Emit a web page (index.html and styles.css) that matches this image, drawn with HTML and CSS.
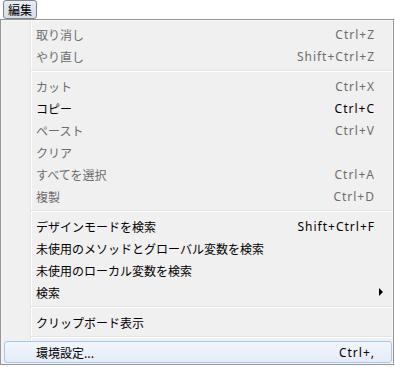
FILE: index.html
```html
<!DOCTYPE html>
<html lang="ja">
<head>
  <meta charset="UTF-8">
  <title>編集メニュー</title>
  <link rel="stylesheet" href="styles.css">
</head>
<body>

<div class="menubar">
  <span class="menubar-item open">編集</span>
</div>

<div class="menu">
  <div class="item disabled"><span class="label">取り消し</span><span class="key">Ctrl+Z</span><span class="sub"></span></div>
  <div class="item disabled"><span class="label">やり直し</span><span class="key">Shift+Ctrl+Z</span><span class="sub"></span></div>
  <div class="sep"></div>
  <div class="item disabled"><span class="label">カット</span><span class="key">Ctrl+X</span><span class="sub"></span></div>
  <div class="item"><span class="label">コピー</span><span class="key">Ctrl+C</span><span class="sub"></span></div>
  <div class="item disabled"><span class="label">ペースト</span><span class="key">Ctrl+V</span><span class="sub"></span></div>
  <div class="item disabled"><span class="label">クリア</span><span class="key"></span><span class="sub"></span></div>
  <div class="item disabled"><span class="label">すべてを選択</span><span class="key">Ctrl+A</span><span class="sub"></span></div>
  <div class="item disabled"><span class="label">複製</span><span class="key">Ctrl+D</span><span class="sub"></span></div>
  <div class="sep"></div>
  <div class="item"><span class="label">デザインモードを検索</span><span class="key">Shift+Ctrl+F</span><span class="sub"></span></div>
  <div class="item"><span class="label">未使用のメソッドとグローバル変数を検索</span><span class="key"></span><span class="sub"></span></div>
  <div class="item"><span class="label">未使用のローカル変数を検索</span><span class="key"></span><span class="sub"></span></div>
  <div class="item"><span class="label">検索</span><span class="key"></span><span class="sub"><i class="arrow"></i></span></div>
  <div class="sep"></div>
  <div class="item"><span class="label">クリップボード表示</span><span class="key"></span><span class="sub"></span></div>
  <div class="sep"></div>
  <div class="item hover"><span class="label">環境設定...</span><span class="key">Ctrl+,</span><span class="sub"></span></div>
</div>

</body>
</html>
```

FILE: styles.css
```css
body {
  margin: 0;
  background-color: #fff;
  font-family: "Noto Sans CJK JP", "Liberation Sans", sans-serif;
  font-size: 12px;
  color: #000;
}
.menubar {
  height: 19px;
  display: flex;
}
.menubar-item {
  margin-left: 3px;
  height: 19px;
  line-height: 17px;
  padding: 0 4px;
  box-sizing: border-box;
  border: 1px solid #7d838c;
  border-radius: 3px;
  background: linear-gradient(#e9edf2, #d7dee7);
}
.menu {
  width: 394px;
  box-sizing: border-box;
  border: 1px solid #979797;
  padding: 3px 1px 1px 3px;
  box-shadow: inset 0 0 0 1px #f5f5f5;
  background: linear-gradient(to right, #f0f0f0 0 29px, #e2e3e3 29px 30px, #fff 30px 31px, #f0f0f0 31px);
}
.item {
  display: flex;
  height: 22px;
  line-height: 21px;
  padding-left: 31px;
  box-sizing: border-box;
  border: 1px solid transparent;
  border-radius: 3px;
  white-space: nowrap;
}
.item .label {
  flex: 1;
}
.item .key {
  font-family: "Noto Sans", "Liberation Sans", sans-serif;
  letter-spacing: 1px;
  text-align: right;
}
.item .sub {
  width: 16px;
  display: flex;
  align-items: center;
}
.arrow {
  display: block;
  margin-left: 4px;
  width: 0;
  height: 0;
  border-left: 4px solid #000;
  border-top: 4px solid transparent;
  border-bottom: 4px solid transparent;
}
.item.disabled {
  color: #6d6d6d;
}
.item.hover {
  border-color: #a8c8ee;
  background: linear-gradient(#f2f6fc, #e4ecf8);
}
.sep {
  margin: 3px 0 3px 27px;
  border-top: 1px solid #e2e3e3;
  border-bottom: 1px solid #fff;
}
```
